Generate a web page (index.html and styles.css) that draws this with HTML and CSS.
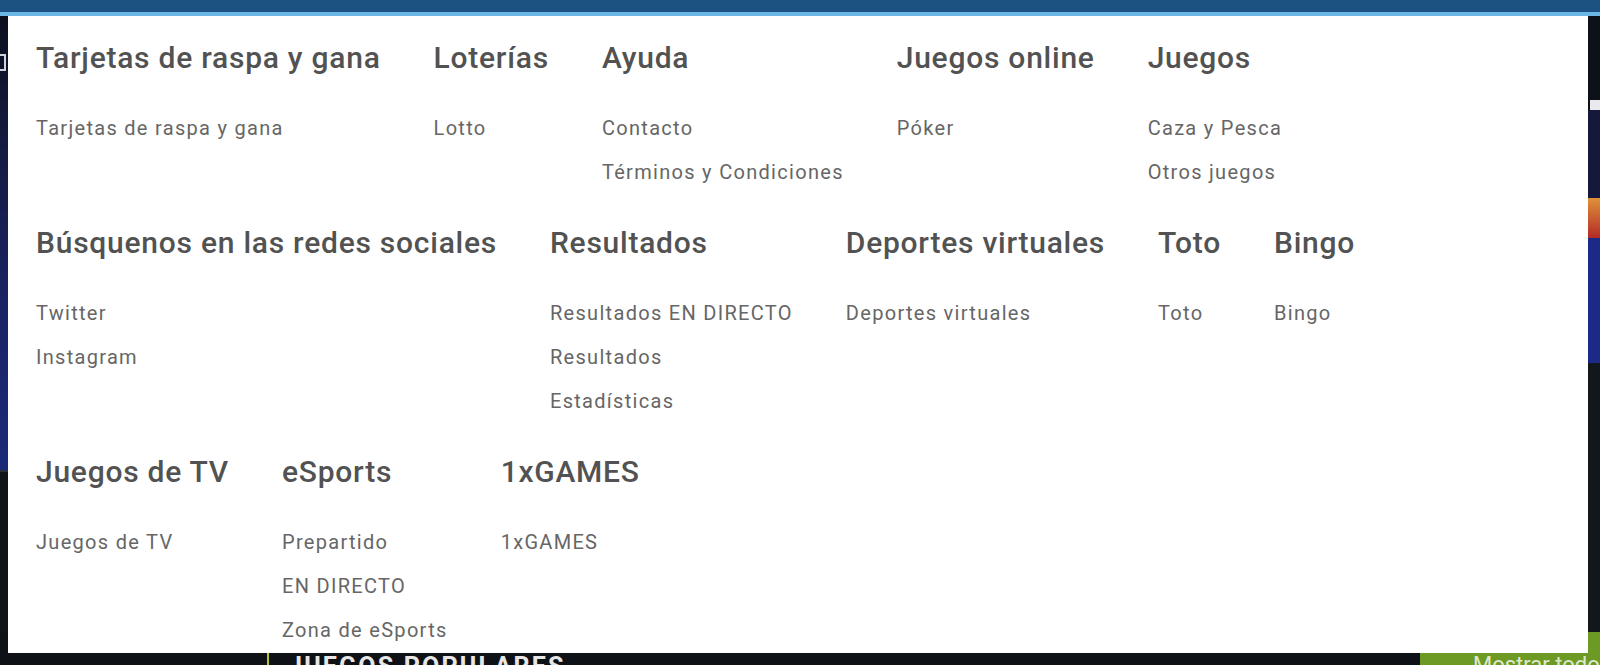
FILE: index.html
```html
<!DOCTYPE html>
<html lang="es">
<head>
<meta charset="utf-8">
<title>Menú</title>
<link rel="stylesheet" href="styles.css">
</head>
<body>
<div class="page">
  <header class="topbar"></header>
  <div class="topline"></div>
  <div class="page-body">
    <div class="bg-left">
      <div class="bg-left-hero"><span class="bg-bracket"></span></div>
      <div class="bg-left-dark"></div>
    </div>
    <div class="bg-right">
      <div class="bg-r-dark"></div>
      <div class="bg-r-white"></div>
      <div class="bg-r-navy"></div>
      <div class="bg-r-orange"></div>
      <div class="bg-r-blue"></div>
      <div class="bg-r-dark2"></div>
    </div>
  </div>
  <div class="page-bottom">
    <div class="pb-left"><span class="pb-bar"></span><span class="pb-title">JUEGOS POPULARES</span></div>
    <div class="pb-green"><span class="pb-more">Mostrar todo</span></div>
  </div>
</div>

<nav class="menu">
  <section class="group">
    <h3 class="group-title">Tarjetas de raspa y gana</h3>
    <a class="group-link">Tarjetas de raspa y gana</a>
  </section>
  <section class="group">
    <h3 class="group-title">Loterías</h3>
    <a class="group-link">Lotto</a>
  </section>
  <section class="group">
    <h3 class="group-title">Ayuda</h3>
    <a class="group-link">Contacto</a>
    <a class="group-link">Términos y Condiciones</a>
  </section>
  <section class="group">
    <h3 class="group-title">Juegos online</h3>
    <a class="group-link">Póker</a>
  </section>
  <section class="group">
    <h3 class="group-title">Juegos</h3>
    <a class="group-link">Caza y Pesca</a>
    <a class="group-link">Otros juegos</a>
  </section>
  <section class="group">
    <h3 class="group-title">Búsquenos en las redes sociales</h3>
    <a class="group-link">Twitter</a>
    <a class="group-link">Instagram</a>
  </section>
  <section class="group">
    <h3 class="group-title">Resultados</h3>
    <a class="group-link">Resultados EN DIRECTO</a>
    <a class="group-link">Resultados</a>
    <a class="group-link">Estadísticas</a>
  </section>
  <section class="group">
    <h3 class="group-title">Deportes virtuales</h3>
    <a class="group-link">Deportes virtuales</a>
  </section>
  <section class="group">
    <h3 class="group-title">Toto</h3>
    <a class="group-link">Toto</a>
  </section>
  <section class="group">
    <h3 class="group-title">Bingo</h3>
    <a class="group-link">Bingo</a>
  </section>
  <section class="group">
    <h3 class="group-title">Juegos de TV</h3>
    <a class="group-link">Juegos de TV</a>
  </section>
  <section class="group">
    <h3 class="group-title">eSports</h3>
    <a class="group-link">Prepartido</a>
    <a class="group-link">EN DIRECTO</a>
    <a class="group-link">Zona de eSports</a>
  </section>
  <section class="group">
    <h3 class="group-title">1xGAMES</h3>
    <a class="group-link">1xGAMES</a>
  </section>
</nav>
</body>
</html>
```

FILE: styles.css
```css
* { box-sizing: border-box; }
html, body { margin: 0; padding: 0; }
body {
  width: 1600px;
  height: 665px;
  overflow: hidden;
  background: #0d1117;
  font-family: Roboto, "Liberation Sans", Arial, sans-serif;
  position: relative;
}

/* background page */
.page { display: flex; flex-direction: column; height: 665px; }
.topbar { height: 12px; background: #1c5281; }
.topline { height: 4px; background: #6db7e7; }
.page-body { display: flex; justify-content: space-between; height: 616px; }
.bg-left { width: 800px; display: flex; flex-direction: column; }
.bg-left-hero {
  height: 454px;
  background: linear-gradient(180deg, #0b0f1e 0%, #141a3c 25%, #1a2262 60%, #1b2a78 100%);
  position: relative;
}
.bg-bracket {
  position: absolute; left: 0; top: 38px;
  width: 6px; height: 17px;
  border: 2px solid #cfd3dc; border-left: none;
}
.bg-left-dark { flex: 1; background: #0f1419; border-top: 2px solid #2a2f36; }
.bg-right { width: 800px; display: flex; flex-direction: column; }
.bg-r-dark { height: 84px; background: #0d1118; }
.bg-r-white { height: 10px; background: #e9e9ee; margin-left: 790px; }
.bg-r-navy { height: 88px; background: #15183a; }
.bg-r-orange { height: 40px; background: linear-gradient(180deg, #e0913a 0%, #b32a26 100%); }
.bg-r-blue { height: 125px; background: #1b2a86; }
.bg-r-dark2 { flex: 1; background: #12171b; }
.page-bottom { height: 33px; display: flex; }
.pb-left { width: 1420px; background: #0e1216; position: relative; }
.pb-bar { position: absolute; left: 267px; top: 0; width: 2px; height: 33px; background: #b9c23a; }
.pb-title {
  position: absolute; left: 288px; top: 22px;
  color: #e7e7e7; font-size: 25px; line-height: 25px; font-weight: 700; letter-spacing: 2.2px;
}
.pb-green { flex: 1; background: #6c9a24; position: relative; }
.pb-more {
  position: absolute; left: 53px; top: 22px;
  color: #dfe8cf; font-size: 22px; line-height: 22px;
}

/* dropdown menu overlay */
.menu {
  position: absolute;
  top: 16px;
  left: 8px;
  width: 1580px;
  height: 637px;
  background: #ffffff;
  padding: 24px 27px 0 28px;
  display: flex;
  flex-wrap: wrap;
  align-content: flex-start;
  column-gap: 53px;
  row-gap: 31px;
}
.group { display: flex; flex-direction: column; }
.group-title {
  margin: 0 0 30px;
  font-size: 30px;
  line-height: 36px;
  font-weight: 500;
  letter-spacing: 0.75px;
  color: #525252;
  white-space: nowrap;
}
.group-link {
  display: block;
  font-size: 20px;
  line-height: 44px;
  letter-spacing: 1.3px;
  color: #666666;
  white-space: nowrap;
  text-decoration: none;
}
```
